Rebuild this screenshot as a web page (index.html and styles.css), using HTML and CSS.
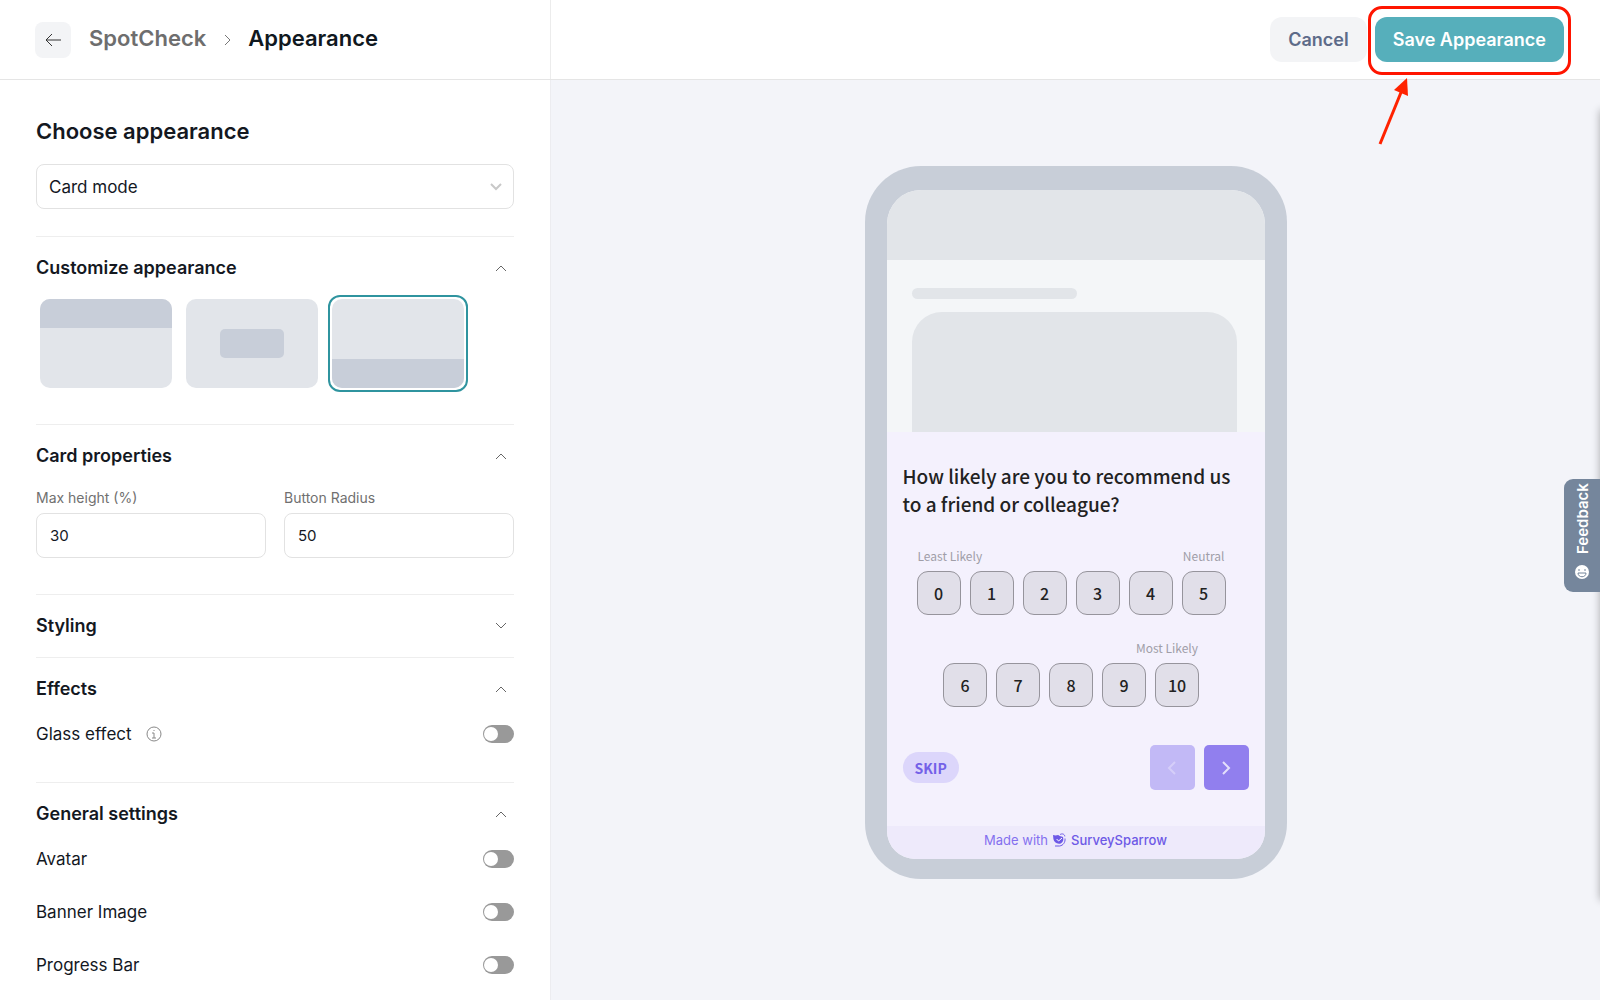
FILE: index.html
```html
<!DOCTYPE html>
<html lang="en">
<head>
    <meta charset="UTF-8">
    <meta name="viewport" content="width=device-width, initial-scale=1.0">
    <title>SpotCheck - Appearance</title>
    <link rel="stylesheet" href="styles.css">
</head>
<body>
    <div class="app">
        <header class="topbar">
            <nav class="crumbs">
                <button class="back" type="button" aria-label="Back">
                    <svg width="18" height="18" viewBox="0 0 18 18"><path d="M17 9H2M8 3L2 9l6 6"/></svg>
                </button>
                <a class="crumb" href="#">SpotCheck</a>
                <svg class="crumb-sep" width="8" height="12" viewBox="0 0 8 12"><path d="M2 1l5 5-5 5"/></svg>
                <h1 class="crumb current">Appearance</h1>
            </nav>
            <div class="actions">
                <button class="btn btn-cancel" type="button">Cancel</button>
                <div class="save-wrap">
                    <button class="btn btn-save" type="button">Save Appearance</button>
                    <div class="highlight"></div>
                    <svg class="arrow" width="32" height="68" viewBox="0 0 32 68"><path class="shaft" d="M2 66L24 12"/><path class="head" d="M29 0L16 12l14 6z"/></svg>
                </div>
            </div>
        </header>

        <aside class="sidebar">
            <div class="choose">
                <label class="choose-title" for="mode">Choose appearance</label>
                <div class="select">
                    <select id="mode">
                        <option>Card mode</option>
                    </select>
                    <svg width="12" height="8" viewBox="0 0 12 8"><path d="M1 1l5 5 5-5"/></svg>
                </div>
            </div>

            <section class="section">
                <button class="section-head" type="button">Customize appearance
                    <svg width="12" height="8" viewBox="0 0 12 8"><path d="M1 7l5-5 5 5"/></svg>
                </button>
                <div class="section-body layouts">
                    <button class="layout top" type="button" aria-label="Top"><span class="thumb"><span class="block"></span></span></button>
                    <button class="layout center" type="button" aria-label="Center"><span class="thumb"><span class="block"></span></span></button>
                    <button class="layout bottom selected" type="button" aria-label="Bottom"><span class="thumb"><span class="block"></span></span></button>
                </div>
            </section>

            <section class="section">
                <button class="section-head" type="button">Card properties
                    <svg width="12" height="8" viewBox="0 0 12 8"><path d="M1 7l5-5 5 5"/></svg>
                </button>
                <div class="section-body fields">
                    <div class="field">
                        <label for="maxHeight">Max height (%)</label>
                        <input type="text" inputmode="numeric" id="maxHeight" value="30">
                    </div>
                    <div class="field">
                        <label for="radius">Button Radius</label>
                        <input type="text" inputmode="numeric" id="radius" value="50">
                    </div>
                </div>
            </section>

            <section class="section">
                <button class="section-head closed" type="button">Styling
                    <svg width="12" height="8" viewBox="0 0 12 8"><path d="M1 1l5 5 5-5"/></svg>
                </button>
            </section>

            <section class="section">
                <button class="section-head" type="button">Effects
                    <svg width="12" height="8" viewBox="0 0 12 8"><path d="M1 7l5-5 5 5"/></svg>
                </button>
                <div class="section-body toggles">
                    <div class="toggle-row">
                        <label for="glass">Glass effect</label>
                        <svg class="info" width="16" height="16" viewBox="0 0 16 16"><circle cx="8" cy="8" r="7"/><path d="M6 7h2v5M6 12h4M8 4v1"/></svg>
                        <input type="checkbox" class="switch" id="glass">
                    </div>
                </div>
            </section>

            <section class="section">
                <button class="section-head" type="button">General settings
                    <svg width="12" height="8" viewBox="0 0 12 8"><path d="M1 7l5-5 5 5"/></svg>
                </button>
                <div class="section-body toggles">
                    <div class="toggle-row"><label for="avatar">Avatar</label><input type="checkbox" class="switch" id="avatar"></div>
                    <div class="toggle-row"><label for="banner">Banner Image</label><input type="checkbox" class="switch" id="banner"></div>
                    <div class="toggle-row"><label for="progress">Progress Bar</label><input type="checkbox" class="switch" id="progress"></div>
                </div>
            </section>
        </aside>

        <main class="preview">
            <div class="phone">
                <div class="screen">
                    <div class="screen-header"></div>
                    <div class="screen-page">
                        <div class="page-line"></div>
                        <div class="page-block"></div>
                    </div>
                    <div class="card">
                        <h2>How likely are you to recommend us to a friend or colleague?</h2>
                        <div class="scales">
                            <div class="scale">
                                <div class="scale-labels"><span>Least Likely</span><span>Neutral</span></div>
                                <div class="scale-row">
                                    <button type="button">0</button>
                                    <button type="button">1</button>
                                    <button type="button">2</button>
                                    <button type="button">3</button>
                                    <button type="button">4</button>
                                    <button type="button">5</button>
                                </div>
                            </div>
                            <div class="scale">
                                <div class="scale-labels end"><span>Most Likely</span></div>
                                <div class="scale-row">
                                    <button type="button">6</button>
                                    <button type="button">7</button>
                                    <button type="button">8</button>
                                    <button type="button">9</button>
                                    <button type="button">10</button>
                                </div>
                            </div>
                        </div>
                        <div class="card-nav">
                            <button class="skip" type="button">SKIP</button>
                            <button class="nav prev" type="button" aria-label="Previous"><svg width="10" height="16" viewBox="0 0 10 16"><path d="M8 2L2 8l6 6"/></svg></button>
                            <button class="nav next" type="button" aria-label="Next"><svg width="10" height="16" viewBox="0 0 10 16"><path d="M2 2l6 6-6 6"/></svg></button>
                        </div>
                    </div>
                    <div class="made-with">
                        <span>Made with</span>
                        <svg width="13" height="14" viewBox="0 0 13 14">
                            <path class="body" d="M0 2c2 .6 3.600 .4 5.200 0C6.500 3.300 8.500 3.200 10 4c.8 2.800 .2 5.400-2.200 6.400C4 11.400 .8 9.200 .4 6z"/>
                            <path class="line" d="M7 1.600c2-1.400 4.600-.6 4.800 1.800M12 5.500c.4 3.800-1.700 6.900-5.400 7.500H2"/>
                            <path class="tick" d="M3.600 6l2 2 3.400-3"/>
                        </svg>
                        <strong>SurveySparrow</strong>
                    </div>
                </div>
            </div>
        </main>

        <!-- Drawer parked outside the window, only its shadow shows -->
        <div class="drawer"></div>
        <button class="feedback" type="button">
            <svg width="16" height="16" viewBox="0 0 16 16"><circle cx="8" cy="8" r="7"/><path d="M5 5v2M11 5v2M4 9h8c0 5-8 5-8 0z"/></svg>
            Feedback
        </button>
    </div>
</body>
</html>
```
FILE: styles.css
```css
/* Reset & base */
*{margin:0;padding:0;box-sizing:border-box}
body{font-family:Inter,"Open Sans",sans-serif;font-size:17px;color:#14181f;background:#fff}
button,input,select{font:inherit;color:inherit;border:0;background:none}
button{cursor:pointer}
svg{display:block;flex:none;fill:none;stroke:currentColor}
.app{position:relative;display:grid;grid-template-columns:551px 1fr;grid-template-rows:80px 1fr;height:100vh;overflow:hidden}

/* Top bar */
.topbar{grid-column:1/-1;display:grid;grid-template-columns:subgrid;border-bottom:1px solid #e5e5e5}
.crumbs{display:flex;align-items:center;padding:0 35px;border-right:1px solid #ececec}
.back{display:grid;place-items:center;width:36px;height:36px;margin-right:18px;border-radius:8px;background:#f3f4f6;color:#333}
.crumb{font-size:22px;line-height:28px;font-weight:600;color:#6e6e6e;text-decoration:none;padding-bottom:4px}
.crumb.current{color:#101820}
.crumb-sep{margin:0 17px;color:#777}
.actions{display:flex;align-items:center;justify-content:flex-end;gap:8px;padding-right:36px}
.btn{height:45px;padding:0 18px;border-radius:12px;font-size:18px;font-weight:600;white-space:nowrap}
.btn-cancel{background:#f3f4f6;color:#5d6b89}
.btn-save{background:#56afbb;color:#fff}
.save-wrap{position:relative}
.highlight{position:absolute;inset:-11px -7px -13px;border:3px solid #ff1500;border-radius:14px;pointer-events:none}
.arrow{position:absolute;left:3px;top:61px;pointer-events:none}
.arrow .shaft{stroke:#ff2200;stroke-width:3}
.arrow .head{fill:#ff2200;stroke:none}

/* Sidebar */
.sidebar{padding:0 36px;border-right:1px solid #ececf0;overflow:hidden}
.choose{padding:37px 0 27px}
.choose-title{display:block;font-size:22px;line-height:28px;font-weight:600;margin-bottom:19px}
.select{position:relative}
.select select{display:block;width:100%;height:45px;padding:0 12px;border:1px solid #e2e2e2;border-radius:8px;background:#fff;appearance:none}
.select svg{position:absolute;right:12px;top:19px;color:#c8c8c8;stroke-width:2;pointer-events:none}
.section{border-top:1px solid #eee}
.section-head{display:flex;align-items:center;justify-content:space-between;width:100%;padding:20px 7px 7px 0;font-size:18px;line-height:22px;font-weight:600;text-align:left}
.section-head.closed{padding-bottom:20px}
.section-head svg{color:#666}

/* Card position */
.layouts{display:flex;gap:6px;padding:9px 0 32px}
.layout{padding:2px;border:2px solid transparent;border-radius:12px}
.layout.selected{border-color:#2f949f}
.thumb{display:flex;width:132px;height:89px;border-radius:10px;background:#e2e5ea;overflow:hidden}
.block{width:100%;height:29px;background:#c8ced9}
.layout.center .block{width:64px;margin:auto;border-radius:5px}
.layout.bottom .block{align-self:flex-end}

/* Fields */
.fields{display:grid;grid-template-columns:1fr 1fr;gap:18px;padding:14px 0 36px}
.field label{display:block;margin-bottom:5px;font-size:14px;line-height:20px;color:#707070}
.field input{display:block;width:100%;height:45px;padding:0 13px;border:1px solid #e2e2e2;border-radius:8px;font-size:15px}

/* Toggles */
.toggles{padding-bottom:22px}
.toggle-row{display:flex;align-items:center;height:53px}
.info{margin-left:14px;color:#888}
.switch{appearance:none;display:flex;align-items:center;width:31px;height:18px;margin-left:auto;padding:1px;border-radius:9px;background:#999;cursor:pointer}
.switch::before{content:"";width:14px;height:14px;border-radius:50%;background:#fff}
.switch:checked{background:#56afbb;justify-content:flex-end}

/* Preview */
.preview{display:flex;justify-content:center;align-items:flex-start;padding-top:86px;background:#f3f4f9}
.phone{width:422px;padding:24px 22px 20px;border-radius:56px;background:#c8ced8}
.screen{border-radius:34px 34px 28px 28px;background:#f4f6f8;overflow:hidden}
.screen-header{height:70px;background:#e2e5e9}
.screen-page{padding:28px 28px 0 25px}
.page-line{width:165px;height:11px;margin-bottom:13px;border-radius:6px;background:#e2e5e9}
.page-block{height:120px;border-radius:30px 30px 0 0;background:#e2e5e9}
.card{padding:30px 16px 36px;background:#f4f1fd;font-family:"Noto Sans CJK SC","Noto Sans",sans-serif}
.card h2{font-size:19px;line-height:28px;font-weight:500;color:#222}
.scales{display:flex;flex-direction:column;align-items:center;gap:23px;padding:28px 9px 38px 0}
.scale-labels{display:flex;justify-content:space-between;padding:0 1px;margin-bottom:5px;font-size:12px;line-height:20px;color:#a09ea8}
.scale-labels.end{justify-content:flex-end}
.scale-row{display:flex;gap:9px}
.scale-row button{width:44px;height:44px;border:1px solid #96949c;border-radius:11px;background:#e1dfe9;font-size:16px;font-weight:500;color:#222}
.card-nav{display:flex;align-items:center;gap:9px}
.skip{height:31px;margin-right:auto;padding:0 12px;border-radius:16px;background:#dcd6fb;color:#7461e8;font-size:14px;font-weight:700}
.nav{display:grid;place-items:center;width:45px;height:45px;border-radius:5px;stroke-width:2}
.prev{background:#c2b9f6;color:#d5cef9}
.next{background:#917fee;color:#e4dffb}
.made-with{display:flex;align-items:center;justify-content:center;gap:5px;height:33px;padding-bottom:6px;background:#eeeafb;color:#8470ef;font-size:13px}
.made-with strong{font-weight:500;color:#6d59e6}
.made-with .body{fill:#6d59e6;stroke:none}
.made-with .line{stroke:#6d59e6}
.made-with .tick{stroke:#fff}

/* Right edge */
.drawer{position:absolute;left:100%;top:110px;bottom:100px;width:300px;box-shadow:0 0 8px rgba(0,0,0,.3)}
.feedback{position:absolute;right:0;top:479px;display:flex;align-items:center;gap:10px;width:36px;height:113px;padding-top:12px;border-radius:0 9px 9px 0;background:#75869c;color:#fff;font-size:15px;font-weight:600;writing-mode:vertical-rl;transform:rotate(180deg)}
.feedback svg{transform:rotate(180deg)}
.feedback circle{fill:#fff;stroke:none}
.feedback path{stroke:#75869c}
```
